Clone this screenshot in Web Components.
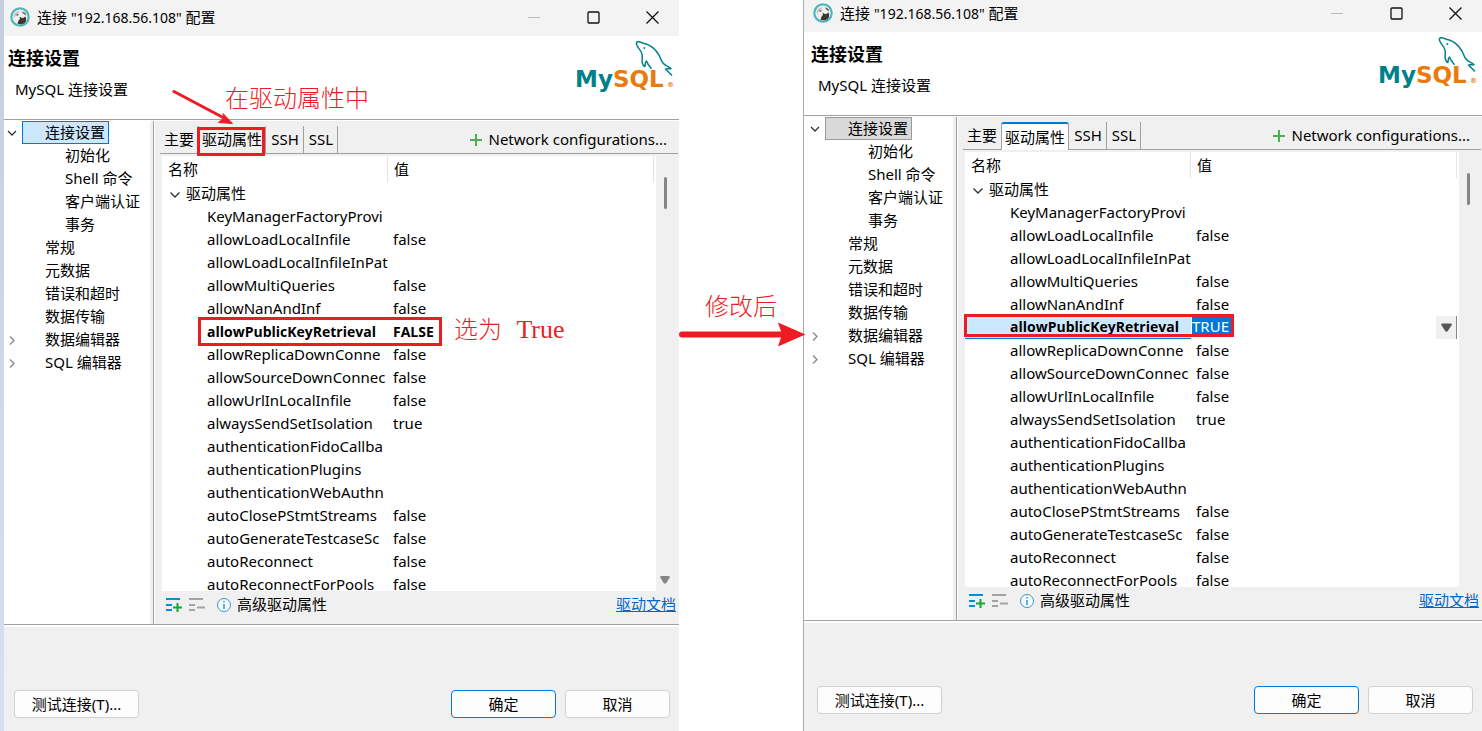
<!DOCTYPE html>
<html lang="zh-CN">
<head>
<meta charset="utf-8">
<title>连接配置</title>
<style>
  html, body { margin: 0; height: 100%; background: #fff; }
  body { font: 15px/23px "Noto Sans", "Noto Sans CJK SC", sans-serif; color: #000; }
</style>
</head>
<body>
<compare-page>
  <config-dialog slot="before" frame="before">
    <nav-tree slot="nav"></nav-tree>
    <tab-strip slot="tabs"></tab-strip>
    <property-table slot="table" value="FALSE"></property-table>
    <red-frame slot="notes" style="left:193px;top:127px;width:62px;height:23px"></red-frame>
    <red-frame slot="notes" style="left:194px;top:317px;width:238px;height:23px"></red-frame>
    <note-text slot="notes" style="left:221px;top:86px">在驱动属性中</note-text>
    <note-text slot="notes" style="left:450px;top:315px">选为 <span style="font:26px/30px 'Liberation Serif', serif">True</span></note-text>
    <red-arrow slot="notes" kind="diagonal" style="left:168px;top:88px"></red-arrow>
  </config-dialog>
  <change-step slot="step">修改后</change-step>
  <config-dialog slot="after" frame="after">
    <nav-tree slot="nav" inactive></nav-tree>
    <tab-strip slot="tabs" active></tab-strip>
    <property-table slot="table" value="TRUE" editing></property-table>
    <red-frame slot="notes" style="left:157px;top:318px;width:264px;height:17px"></red-frame>
  </config-dialog>
</compare-page>

<script>
const define = (name, render) => customElements.define(name, class extends HTMLElement {
  connectedCallback() {
    if (this.shadowRoot) return;
    const t = document.createElement('template');
    t.innerHTML = render(this);
    this.attachShadow({ mode: 'open' }).append(t.content.cloneNode(true));
  }
});

/* Two dialogs side by side with the step between them */
define('compare-page', () => `
<style>
  :host { display: grid; grid-template-columns: 4px minmax(0, 675fr) 128px minmax(0, 675fr); height: 100vh; overflow: hidden; }
  .edge { background: linear-gradient(#c5cde0, #d8e0f0); }
</style>
<div class="edge"></div>
<slot name="before"></slot><slot name="step"></slot><slot name="after"></slot>`);

define('red-frame', () => `
<style>:host { display: block; position: absolute; border: 3px solid #ed1c24; z-index: 3; }</style>`);

define('note-text', () => `
<style>:host { display: block; position: absolute; z-index: 3; color: #ed1c24; white-space: nowrap;
  font: 300 24px/30px "Liberation Mono", "Noto Sans CJK SC", monospace; }</style><slot></slot>`);

define('red-arrow', el => el.getAttribute('kind') === 'diagonal' ? `
<style>:host { display: block; position: absolute; z-index: 3; } svg { display: block; }</style>
<svg width="64" height="40" viewBox="0 0 64 40"><path d="M2 3.500L52 30" stroke="#ed1c24" stroke-width="3" stroke-linecap="round"/><path d="M60.500 35.500L46.500 34.500L52 30L51 25.500Z" fill="#ed1c24" stroke="#ed1c24"/></svg>` : `
<style>:host { display: block; } svg { display: block; overflow: visible; }</style>
<svg width="128" height="26" viewBox="0 0 128 26"><path d="M3 12.500H104" stroke="#ed1c24" stroke-width="6" stroke-linecap="round"/><path d="M126.500 12.500L99 24.500L103 12.500L99 .5Z" fill="#ed1c24"/></svg>`);

define('change-step', () => `
<style>
  :host { display: flex; flex-direction: column; justify-content: center; position: relative; z-index: 4; margin-bottom: 94px; }
  p { margin: 0 0 2px 26px; color: #ed1c24; font: 300 24px/30px "Noto Sans CJK SC", sans-serif; }
</style>
<p><slot></slot></p><red-arrow></red-arrow>`);

define('app-icon', () => `
<style>:host { display: block; } svg { display: block; }</style>
<svg width="20" height="20" viewBox="0 0 20 20"><circle cx="10" cy="10" r="8.700" fill="#eef1f0" stroke="#4fb6bd" stroke-width="2.200"/>
<path d="M3.500 9C4 5.500 7 4 10 4.500C8.500 6 5 8 4.800 11Z" fill="#c5c0bb"/><path d="M11.500 4.300l3.500 1.400 1.300 3-2.500-1.800z" fill="#5a504b"/>
<path d="M7.500 16.800C8 14 9 13.200 10 11.800L9.500 9.800l3.200 1.400 2.800-1.600c1 2.500 1 4.700-.8 6.400-2 1.500-5 1.600-7.200.8z" fill="#41352f"/><path d="M5.800 7.800l3-1.100-1.200 2.300z" fill="#5a504b"/></svg>`);

define('mysql-logo', () => `
<style>:host { display: block; } svg { display: block; overflow: visible; } text { font-family: "DejaVu Sans", sans-serif; font-weight: 700; }</style>
<svg width="98" height="52" viewBox="0 0 98 52" role="img" aria-label="MySQL">
<g fill="none" stroke="#00818a" stroke-width="1.500" stroke-linejoin="round">
<path d="M61.300 5C59.500 2 60.500.6 62.500.8C65 1 67 2.500 69.500 2.800C77 5 80 9 83 14C85 18 85 20 87 22C89 25 93 25.500 95 27.800C93 27.500 91 28 89.500 28L96 34.500"/>
<path d="M61.300 5C62.500 8 65 9 66 13C67 16 65.500 18 66.300 22C67 24 67.500 25.500 68.800 25.500C69.500 23 69 21 70.500 20C71.500 23 73.500 25.500 75.500 27.800"/></g>
<circle cx="68.300" cy="7" r="1" fill="#00818a"/>
<text x="-1" y="46" font-size="23" fill="#00818a">My<tspan fill="#e97b0c">SQL</tspan></text>
<text x="91" y="46" font-size="7" fill="#e97b0c">®</text></svg>`);

define('push-button', el => `
<style>
  :host { display: block; }
  button { display: block; width: 100%; height: 28px; padding: 0; font: inherit; color: #000; background: #fdfdfd;
    border: 1px solid ${el.hasAttribute('primary') ? '#0078d4' : '#d0d0d0'}; border-radius: 4px; }
</style><button type="button"><slot></slot></button>`);

define('nav-tree', el => {
  const items = [['连接设置', 0, 'v'], ['初始化', 1], ['Shell 命令', 1], ['客户端认证', 1], ['事务', 1], ['常规', 0], ['元数据', 0],
    ['错误和超时', 0], ['数据传输', 0], ['数据编辑器', 0, '>'], ['SQL 编辑器', 0, '>']];
  const off = el.hasAttribute('inactive');
  return `
<style>
  :host { display: block; background: #fff; }
  ul { list-style: none; margin: 0; padding: 0; }
  li { display: flex; align-items: center; height: 23px; }
  .mark { width: 18px; height: 12px; flex: none; }
  .mark svg { display: block; margin-left: 2px; }
  span { box-sizing: border-box; height: 23px; line-height: 23px; padding: 0 3px 0 23px; white-space: nowrap; }
  .child span { padding-left: 43px; }
  .sel span { padding-left: 22px; line-height: 21px; background: ${off ? '#d9d9d9' : '#cce8ff'}; border: 1px solid ${off ? '#999' : '#0078d7'}; }
</style>
<ul>${items.map(([t, d, m], i) => `<li class="${d ? 'child' : ''} ${i ? '' : 'sel'}"><div class="mark">${m ?
  `<svg width="12" height="12" fill="none" stroke="${m === 'v' ? '#333' : '#888'}" stroke-width="1.300"><path d="${m === 'v' ? 'M2 4L6 8L10 4' : 'M4 2.500L8 6.500L4 10.500'}"/></svg>` : ''}</div><span>${t}</span></li>`).join('')}</ul>`;
});

define('tab-strip', el => `
<style>
  :host { display: flex; align-items: flex-end; height: 33px; border-bottom: 1px solid #a0a0a0; margin: 0 1px 0 5px; box-sizing: border-box; }
  button { font: inherit; color: #000; border: 0; background: none; box-sizing: border-box; height: 27px; padding: 0 3px 0 4px; line-height: 27px; white-space: nowrap; }
  .tab { border-right: 1px solid #a0a0a0; }
  .first { padding: 0 4px; border: 0; width: 38px; }
  .main { width: 68px; border-left: 1px solid #a0a0a0; padding: 0 2px; }
  .on { height: 28px; margin-bottom: -1px; background: #fff; border-top: 2px solid #0078d4; border-radius: 3px 3px 0 0; line-height: 25px; }
  .ssh { width: 38px; } .ssl { width: 34px; }
  .net { margin-left: auto; padding: 0 11px 0 0; display: flex; align-items: center; gap: 6px; }
</style>
<button class="tab first">主要</button><button class="tab main ${el.hasAttribute('active') ? 'on' : ''}">驱动属性</button><button class="tab ssh">SSH</button><button class="tab ssl">SSL</button>
<button class="net"><svg width="12" height="12"><path d="M6 0V12M0 6H12" stroke="#4caf50" stroke-width="2"/></svg>Network configurations...</button>`);

define('property-table', el => {
  const editing = el.hasAttribute('editing');
  const rows = [['KeyManagerFactoryProvi', ''], ['allowLoadLocalInfile', 'false'], ['allowLoadLocalInfileInPat', ''],
    ['allowMultiQueries', 'false'], ['allowNanAndInf', 'false'], ['allowPublicKeyRetrieval', el.getAttribute('value')],
    ['allowReplicaDownConne', 'false'], ['allowSourceDownConnec', 'false'], ['allowUrlInLocalInfile', 'false'],
    ['alwaysSendSetIsolation', 'true'], ['authenticationFidoCallba', ''], ['authenticationPlugins', ''],
    ['authenticationWebAuthn', ''], ['autoClosePStmtStreams', 'false'], ['autoGenerateTestcaseSc', 'false'],
    ['autoReconnect', 'false'], ['autoReconnectForPools', 'false']];
  return `
<style>
  :host { display: flex; min-height: 0; flex: 1; margin: 2px 3px 0 7px; overflow: hidden; }
  .view { flex: 1; min-width: 0; overflow: hidden; background: #fff; padding-right: 2px; }
  table { width: 100%; table-layout: fixed; border-collapse: separate; border-spacing: 0; }
  th, td { box-sizing: border-box; padding: 0 0 0 5px; height: 23px; line-height: 23px; text-align: left; font-weight: 400; white-space: nowrap; overflow: hidden; }
  th { height: 26px; line-height: 26px; padding-left: 6px; border-right: 1px solid #e5e5e5; }
  th:first-child { width: 226px; }
  td:first-child { padding-left: 45px; }
  .group td:first-child { padding-left: 7px; }
  .group svg { margin-right: 5px; vertical-align: -1px; }
  .key td { font-family: "Open Sans", sans-serif; font-size: 14px; font-weight: 700; }
  .editing td:first-child { background: #cce8ff; border-bottom: 1px solid #0078d7; line-height: 22px; }
  .editor { display: flex; align-items: flex-start; justify-content: space-between; height: 23px; margin-left: -4px; }
  input { font: 15px/19px "Noto Sans", sans-serif; width: 39px; height: 19px; box-sizing: border-box; border: 0; padding: 0; margin: 1px 0 0; background: #0078d7; color: #fff; }
  button { padding: 0; width: 21px; height: 23px; border: 0; border-right: 1px solid #888; background: #f0f0f0; }
  button svg { display: block; margin: auto; }
  .bar { flex: none; width: 20px; background: #f0f0f0; display: flex; flex-direction: column; align-items: center; justify-content: space-between; padding: 21px 2px 6px 0; box-sizing: border-box; }
  .thumb { width: 3px; height: 32px; border-radius: 2px; background: #858585; }
</style>
<div class="view"><table>
<thead><tr><th>名称</th><th>值</th></tr></thead>
<tbody><tr class="group"><td colspan="2"><svg width="12" height="10" fill="none" stroke="#333" stroke-width="1.400"><path d="M1.500 2.500L6 7L10.500 2.500"/></svg>驱动属性</td></tr>
${rows.map(([k, v], i) => {
    const hit = i === 5;
    const cell = hit && editing ? `<div class="editor"><input aria-label="${k}" value="${v}"><button type="button" aria-label="选择"><svg width="11" height="9"><path d="M0 1.500L1 .500H10L11 1.500L6.500 8.500H4.500Z" fill="#555"/></svg></button></div>` : v;
    return `<tr class="${hit ? 'key' : ''} ${hit && editing ? 'editing' : ''}"><td>${k}</td><td>${cell}</td></tr>`;
  }).join('')}
</tbody></table></div>
<div class="bar"><div class="thumb"></div>${editing ? '' : '<svg width="10" height="9"><path d="M0 1L1 0H9L10 1L6 7.500H4Z" fill="#858585"/></svg>'}</div>`;
});

define('config-dialog', el => {
  const after = el.getAttribute('frame') === 'after';
  return `
<style>
  :host { display: flex; flex-direction: column; position: relative; min-width: 0; background: #f0f0f0; ${after ? 'margin-top: -4px; height: calc(100vh + 4px);' : 'height: 100vh;'} }
  ${after ? `:host::before { content: ""; position: absolute; left: -4px; top: 0; bottom: 0; width: 3px; border-left: 1px solid #aaa;
    background: linear-gradient(#a0a0a0, #a0a0a0) 0 119px / 3px 1px no-repeat, linear-gradient(#a0a0a0, #a0a0a0) 0 calc(100% - 110px) / 3px 1px no-repeat,
    linear-gradient(#f0f0f0, #f0f0f0) 0 100% / 3px 108px no-repeat, linear-gradient(#f3f3f3, #f3f3f3) 0 0 / 3px 36px no-repeat, #fff; }` : ''}
  header { display: flex; align-items: center; height: 36px; background: #f3f3f3; padding: 0 0 2px 6px; box-sizing: border-box; flex: none; }
  header span { margin-left: 7px; flex: 1; line-height: 34px; white-space: nowrap; }
  header small { font-size: 14px; }
  .controls { display: flex; gap: 46px; padding: 0 20px 0 0; }
  .controls button { border: 0; background: none; padding: 0; width: 13px; height: 13px; }
  .controls svg { display: block; }
  .banner { display: flex; justify-content: space-between; background: #fff; height: 84px; box-sizing: border-box; padding: 5px 5px 0 4px; border-bottom: 1px solid #a0a0a0; flex: none; }
  h1 { font-size: 18px; line-height: 24px; margin: 5px 0 8px; }
  .banner p { margin: 0 0 0 7px; }
  .body { flex: 1; min-height: 0; display: flex; border-top: 1px solid #fff; border-bottom: 1px solid #a0a0a0; }
  .nav { width: 149px; flex: none; background: #fff; border-right: 1px solid #a0a0a0; box-shadow: inset -3px 0 #f0f0f0; }
  .nav ::slotted(nav-tree) { margin-right: 3px; }
  .pane { flex: 1; min-width: 0; display: flex; flex-direction: column; border-left: 1px solid #fff; }
  .tools { display: flex; align-items: center; height: 33px; padding: 0 3px 6px 11px; box-sizing: border-box; flex: none; }
  .tools svg { display: block; margin-right: 7px; }
  .tools .info { margin: 0 6px 0 5px; }
  .tools a { margin-left: auto; color: #0066cc; }
  footer { flex: none; height: ${after ? 110 : 106}px; box-sizing: border-box; border-top: 2px solid #fff; padding: 63px 9px 0 10px; display: flex; gap: 9px; }
  .test { width: 125px; margin-right: auto; } .act { width: 105px; }
</style>
<header><app-icon></app-icon><span>连接 <small>"192.168.56.108"</small> 配置</span>
<div class="controls">
<button aria-label="最小化"><svg width="13" height="13"><path d="M0 6.500H12" stroke="#bbb"/></svg></button>
<button aria-label="最大化"><svg width="13" height="13"><rect x="1" y="1" width="11" height="11" rx="1" fill="none" stroke="#111" stroke-width="1.300"/></svg></button>
<button aria-label="关闭"><svg width="13" height="13"><path d="M.500.500L12.500 12.500M12.500.500L.500 12.500" stroke="#111" stroke-width="1.300"/></svg></button></div></header>
<div class="banner"><div><h1>连接设置</h1><p>MySQL 连接设置</p></div><mysql-logo></mysql-logo></div>
<div class="body"><div class="nav"><slot name="nav"></slot></div>
<div class="pane"><slot name="tabs"></slot><slot name="table"></slot>
<div class="tools">
<svg width="16" height="14"><path d="M0 1H14M0 7H6M0 12H6" stroke="#0090d8" stroke-width="2"/><path d="M11.500 5V14M7 9.500H16" stroke="#12a83a" stroke-width="2"/></svg>
<svg width="16" height="14"><path d="M0 1H14M0 7H6M0 12H6M8 9.500H16" stroke="#a3a3a3" stroke-width="2"/></svg>
<svg class="info" width="14" height="14" style="overflow:visible"><circle cx="7" cy="7" r="6.500" fill="#f5fafd" stroke="#3994d0"/><path d="M7 6V11M7 3V4.500" stroke="#3994d0" stroke-width="1.500"/></svg>
<span>高级驱动属性</span><a href="#docs">驱动文档</a></div></div></div>
<footer><push-button class="test">测试连接(T)...</push-button><push-button class="act" primary>确定</push-button><push-button class="act">取消</push-button></footer>
<slot name="notes"></slot>`;
});
</script>
</body>
</html>
